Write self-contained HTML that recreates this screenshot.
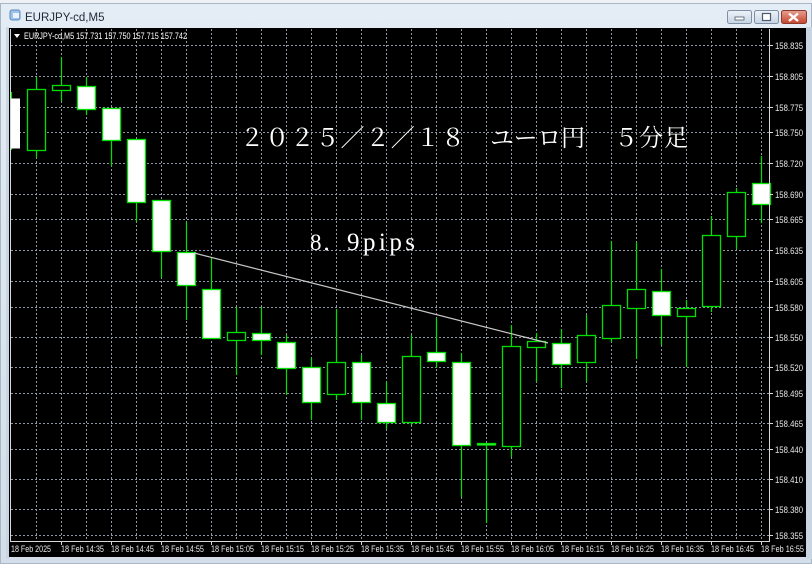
<!DOCTYPE html>
<html><head><meta charset="utf-8"><style>
html,body{margin:0;padding:0;width:812px;height:564px;overflow:hidden;background:#dfe8f2}
svg{display:block}
</style></head><body>
<svg width="812" height="564" xmlns="http://www.w3.org/2000/svg" font-family="Liberation Sans, sans-serif">
<defs>
<linearGradient id="tb" x1="0" y1="0" x2="0" y2="1"><stop offset="0" stop-color="#e4ecf5"/><stop offset="1" stop-color="#d3deea"/></linearGradient>
<linearGradient id="btn" x1="0" y1="0" x2="0" y2="1"><stop offset="0" stop-color="#eef3f9"/><stop offset="1" stop-color="#c6d4e4"/></linearGradient>
<linearGradient id="cls" x1="0" y1="0" x2="0" y2="1"><stop offset="0" stop-color="#e8a090"/><stop offset="1" stop-color="#c4442c"/></linearGradient>
</defs>
<rect x="0" y="0" width="812" height="564" fill="url(#tb)"/>
<rect x="0" y="0" width="812" height="3" fill="#eef2f6"/>
<rect x="0.5" y="3.5" width="811" height="560" fill="none" stroke="#a9b6c4"/>
<rect x="10" y="10" width="10" height="10" rx="2" fill="#9fc2e6" stroke="#5b8bc0"/>
<rect x="13" y="13" width="6" height="5" fill="#eaf3fb"/>
<text x="25" y="21" font-size="11.5" fill="#1e2a38">EURJPY-cd,M5</text>
<rect x="727.5" y="10.5" width="24" height="13" rx="2" fill="url(#btn)" stroke="#7e8ea3"/>
<rect x="735" y="17" width="9" height="3" fill="#fff" stroke="#4b5a6c" stroke-width="0.8"/>
<rect x="754.5" y="10.5" width="24" height="13" rx="2" fill="url(#btn)" stroke="#7e8ea3"/>
<rect x="762.5" y="13.5" width="8" height="7" fill="#fff" stroke="#4b5a6c" stroke-width="1.2"/>
<rect x="781.5" y="10.5" width="25" height="13" rx="2" fill="url(#cls)" stroke="#8a3a2c"/>
<path d="M789 13.5 L798 21 M798 13.5 L789 21" stroke="#fff" stroke-width="2.4"/>
<rect x="9" y="28" width="797" height="529" fill="#000"/>
<rect x="6" y="27" width="3" height="532" fill="#c9d5e2"/>
<rect x="806" y="27" width="6" height="532" fill="#c9d5e2"/>
<g stroke="#8e98a6" stroke-width="1" stroke-dasharray="2 2">
<path d="M36.5 29V541 M61.5 29V541 M86.5 29V541 M111.5 29V541 M136.5 29V541 M161.5 29V541 M186.5 29V541 M211.5 29V541 M236.5 29V541 M261.5 29V541 M286.5 29V541 M311.5 29V541 M336.5 29V541 M361.5 29V541 M386.5 29V541 M411.5 29V541 M436.5 29V541 M461.5 29V541 M486.5 29V541 M511.5 29V541 M536.5 29V541 M561.5 29V541 M586.5 29V541 M611.5 29V541 M636.5 29V541 M661.5 29V541 M686.5 29V541 M711.5 29V541 M736.5 29V541 M761.5 29V541"/>
<path d="M11 45.5H770 M11 76.5H770 M11 107.5H770 M11 132.5H770 M11 163.5H770 M11 194.5H770 M11 219.5H770 M11 250.5H770 M11 281.5H770 M11 307.5H770 M11 337.5H770 M11 367.5H770 M11 393.5H770 M11 423.5H770 M11 449.5H770 M11 479.5H770 M11 509.5H770 M11 535.5H770"/>
</g>
<g stroke="#00e000" stroke-width="1.2" fill="none">
<path d="M11.5 92V150 M36.5 77V158 M61.5 57V101 M86.5 77V115 M111.5 108V166 M136.5 139V222 M161.5 200V278 M186.5 222V320 M211.5 258V338 M236.5 307V375 M261.5 307V355 M286.5 335V395 M311.5 358V420 M336.5 309V400 M361.5 355V420 M386.5 382V429 M411.5 335V425 M436.5 318V368 M461.5 353V497 M486.5 443V523 M511.5 325V457 M536.5 333V382 M561.5 329V388 M586.5 315V382 M611.5 241V342 M636.5 242V359 M661.5 269V345 M686.5 300V367 M711.5 216V312 M736.5 188V249 M761.5 156V223"/>
</g>
<g stroke="#00e000" stroke-width="1.3">
<rect x="11" y="98.5" width="9" height="50" fill="#fff" stroke="none"/>
<rect x="27.5" y="89.5" width="18" height="61" fill="#000"/>
<rect x="52.5" y="85.5" width="18" height="5" fill="#000"/>
<rect x="77.5" y="86.5" width="18" height="23" fill="#fff"/>
<rect x="102.5" y="108.5" width="18" height="32" fill="#fff"/>
<rect x="127.5" y="139.5" width="18" height="63" fill="#fff"/>
<rect x="152.5" y="200.5" width="18" height="51" fill="#fff"/>
<rect x="177.5" y="252.5" width="18" height="33" fill="#fff"/>
<rect x="202.5" y="289.5" width="18" height="49" fill="#fff"/>
<rect x="227.5" y="332.5" width="18" height="8" fill="#000"/>
<rect x="252.5" y="333.5" width="18" height="7" fill="#fff"/>
<rect x="277.5" y="342.5" width="18" height="26" fill="#fff"/>
<rect x="302.5" y="367.5" width="18" height="35" fill="#fff"/>
<rect x="327.5" y="362.5" width="18" height="32" fill="#000"/>
<rect x="352.5" y="362.5" width="18" height="40" fill="#fff"/>
<rect x="377.5" y="403.5" width="18" height="19" fill="#fff"/>
<rect x="402.5" y="356.5" width="18" height="66" fill="#000"/>
<rect x="427.5" y="352.5" width="18" height="9" fill="#fff"/>
<rect x="452.5" y="362.5" width="18" height="83" fill="#fff"/>
<rect x="477.5" y="443.5" width="18" height="1.5" fill="#fff"/>
<rect x="502.5" y="346.5" width="18" height="100" fill="#000"/>
<rect x="527.5" y="341.5" width="18" height="6" fill="#000"/>
<rect x="552.5" y="343.5" width="18" height="21" fill="#fff"/>
<rect x="577.5" y="335.5" width="18" height="27" fill="#000"/>
<rect x="602.5" y="305.5" width="18" height="33" fill="#000"/>
<rect x="627.5" y="289.5" width="18" height="19" fill="#000"/>
<rect x="652.5" y="291.5" width="18" height="24" fill="#fff"/>
<rect x="677.5" y="308.5" width="18" height="8" fill="#000"/>
<rect x="702.5" y="235.5" width="18" height="71" fill="#000"/>
<rect x="727.5" y="192.5" width="18" height="44" fill="#000"/>
<rect x="752.5" y="183.5" width="18" height="21" fill="#fff"/>
</g>
<line x1="194" y1="253" x2="548" y2="343" stroke="#c8c8c8" stroke-width="1.2"/>
<path d="M10.5 29V541.5H769.5V29" fill="none" stroke="#d8d8d8" stroke-width="1"/>
<path d="M14 34H20L17 38Z" fill="#fff"/>
<text x="24" y="39" font-size="9" fill="#fff" textLength="163" lengthAdjust="spacingAndGlyphs">EURJPY-cd,M5  157.731 157.750 157.715 157.742</text>
<g font-size="9.5" fill="#e8e8e8">
<text x="775" y="49" textLength="28" lengthAdjust="spacingAndGlyphs">158.835</text><text x="775" y="80" textLength="28" lengthAdjust="spacingAndGlyphs">158.805</text><text x="775" y="111" textLength="28" lengthAdjust="spacingAndGlyphs">158.775</text><text x="775" y="136" textLength="28" lengthAdjust="spacingAndGlyphs">158.750</text><text x="775" y="167" textLength="28" lengthAdjust="spacingAndGlyphs">158.720</text><text x="775" y="198" textLength="28" lengthAdjust="spacingAndGlyphs">158.690</text><text x="775" y="223" textLength="28" lengthAdjust="spacingAndGlyphs">158.665</text><text x="775" y="254" textLength="28" lengthAdjust="spacingAndGlyphs">158.635</text><text x="775" y="285" textLength="28" lengthAdjust="spacingAndGlyphs">158.605</text><text x="775" y="311" textLength="28" lengthAdjust="spacingAndGlyphs">158.580</text><text x="775" y="341" textLength="28" lengthAdjust="spacingAndGlyphs">158.550</text><text x="775" y="371" textLength="28" lengthAdjust="spacingAndGlyphs">158.520</text><text x="775" y="397" textLength="28" lengthAdjust="spacingAndGlyphs">158.495</text><text x="775" y="427" textLength="28" lengthAdjust="spacingAndGlyphs">158.465</text><text x="775" y="453" textLength="28" lengthAdjust="spacingAndGlyphs">158.440</text><text x="775" y="483" textLength="28" lengthAdjust="spacingAndGlyphs">158.410</text><text x="775" y="513" textLength="28" lengthAdjust="spacingAndGlyphs">158.380</text><text x="775" y="539" textLength="28" lengthAdjust="spacingAndGlyphs">158.355</text>
</g>
<g stroke="#d8d8d8"><path d="M770 45.5h3 M770 76.5h3 M770 107.5h3 M770 132.5h3 M770 163.5h3 M770 194.5h3 M770 219.5h3 M770 250.5h3 M770 281.5h3 M770 307.5h3 M770 337.5h3 M770 367.5h3 M770 393.5h3 M770 423.5h3 M770 449.5h3 M770 479.5h3 M770 509.5h3 M770 535.5h3"/>
<path d="M61.5 542v3 M111.5 542v3 M161.5 542v3 M211.5 542v3 M261.5 542v3 M311.5 542v3 M361.5 542v3 M411.5 542v3 M461.5 542v3 M511.5 542v3 M561.5 542v3 M611.5 542v3 M661.5 542v3 M711.5 542v3 M761.5 542v3"/></g>
<g font-size="9.5" fill="#e8e8e8">
<text x="11" y="552" textLength="40" lengthAdjust="spacingAndGlyphs">18 Feb 2025</text>
<text x="61" y="552" textLength="43" lengthAdjust="spacingAndGlyphs">18 Feb 14:35</text><text x="111" y="552" textLength="43" lengthAdjust="spacingAndGlyphs">18 Feb 14:45</text><text x="161" y="552" textLength="43" lengthAdjust="spacingAndGlyphs">18 Feb 14:55</text><text x="211" y="552" textLength="43" lengthAdjust="spacingAndGlyphs">18 Feb 15:05</text><text x="261" y="552" textLength="43" lengthAdjust="spacingAndGlyphs">18 Feb 15:15</text><text x="311" y="552" textLength="43" lengthAdjust="spacingAndGlyphs">18 Feb 15:25</text><text x="361" y="552" textLength="43" lengthAdjust="spacingAndGlyphs">18 Feb 15:35</text><text x="411" y="552" textLength="43" lengthAdjust="spacingAndGlyphs">18 Feb 15:45</text><text x="461" y="552" textLength="43" lengthAdjust="spacingAndGlyphs">18 Feb 15:55</text><text x="511" y="552" textLength="43" lengthAdjust="spacingAndGlyphs">18 Feb 16:05</text><text x="561" y="552" textLength="43" lengthAdjust="spacingAndGlyphs">18 Feb 16:15</text><text x="611" y="552" textLength="43" lengthAdjust="spacingAndGlyphs">18 Feb 16:25</text><text x="661" y="552" textLength="43" lengthAdjust="spacingAndGlyphs">18 Feb 16:35</text><text x="711" y="552" textLength="43" lengthAdjust="spacingAndGlyphs">18 Feb 16:45</text><text x="761" y="552" textLength="43" lengthAdjust="spacingAndGlyphs">18 Feb 16:55</text>
</g>
<g font-size="24" fill="#fff" font-family="Liberation Serif, Noto Serif CJK SC, serif">
<text x="240" y="146" textLength="225" lengthAdjust="spacing">２０２５／２／１８</text>
<text x="490" y="146" textLength="95" lengthAdjust="spacing">ユーロ円</text>
<text x="614" y="146" textLength="74" lengthAdjust="spacing">５分足</text>
<text x="310" y="250" font-size="23">8</text>
<text x="323" y="250" font-size="23">．</text>
<text x="347" y="250" font-size="25" textLength="68" lengthAdjust="spacing">9pips</text>
</g>
</svg>
</body></html>
